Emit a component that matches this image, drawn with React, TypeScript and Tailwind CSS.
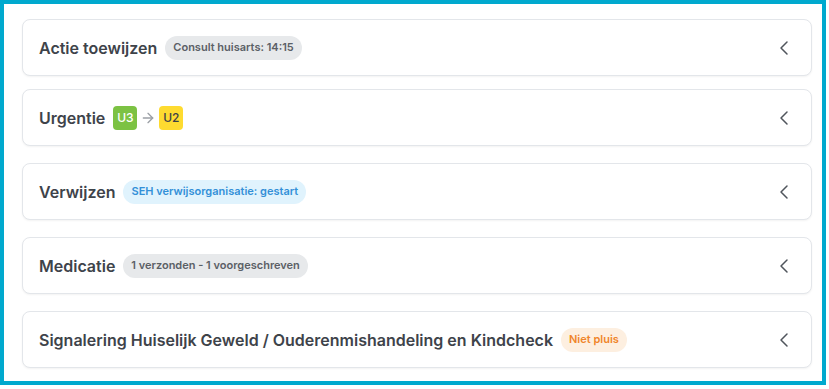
import { ChevronLeft, ArrowRight } from "lucide-react";
import type { ReactNode } from "react";

function Badge({ tone, children }: { tone: "gray" | "blue" | "orange"; children: ReactNode }) {
  const tones = {
    gray: "bg-[#e7e9eb] text-[#5b6066]",
    blue: "bg-[#e0f3fd] text-[#3390d8]",
    orange: "bg-[#fdefe0] text-[#f0852a]",
  };
  return (
    <span className={`inline-flex h-6 items-center rounded-full px-2 text-[11px] font-semibold ${tones[tone]}`}>
      {children}
    </span>
  );
}

function Row({ title, children, className = "" }: { title: string; children: ReactNode; className?: string }) {
  return (
    <div
      className={`flex h-[57px] items-center rounded-lg border border-[#e3e6ea] bg-white pl-4 pr-[15px] shadow-[0_1px_2px_rgba(0,0,0,0.05)] ${className}`}
    >
      <div className="flex flex-1 items-center gap-2">
        <span className="text-[16px] font-semibold text-[#3e434a]">{title}</span>
        {children}
      </div>
      <ChevronLeft size={24} strokeWidth={1.5} className="text-[#50555c]" />
    </div>
  );
}

export default function App() {
  return (
    <div className="h-[385px] w-[826px] border-4 border-[#00a9ce] bg-white pl-[18px] pr-[10px] pt-[15px] font-['Inter',sans-serif]">
      <Row title="Actie toewijzen">
        <Badge tone="gray">Consult huisarts: 14:15</Badge>
      </Row>
      <Row title="Urgentie" className="mt-[13px]">
        <div className="flex items-center gap-[3px]">
          <span className="flex size-6 items-center justify-center rounded bg-[#7cc243] text-[12px] font-medium text-white">
            U3
          </span>
          <ArrowRight size={16} strokeWidth={2} className="text-[#9ca0a6]" />
          <span className="flex size-6 items-center justify-center rounded bg-[#fedb30] text-[12px] font-medium text-[#3c4047]">
            U2
          </span>
        </div>
      </Row>
      <Row title="Verwijzen" className="mt-[17px]">
        <Badge tone="blue">SEH verwijsorganisatie: gestart</Badge>
      </Row>
      <Row title="Medicatie" className="mt-[17px]">
        <Badge tone="gray">1 verzonden - 1 voorgeschreven</Badge>
      </Row>
      <Row title="Signalering Huiselijk Geweld / Ouderenmishandeling en Kindcheck" className="mt-[17px]">
        <Badge tone="orange">Niet pluis</Badge>
      </Row>
    </div>
  );
}
